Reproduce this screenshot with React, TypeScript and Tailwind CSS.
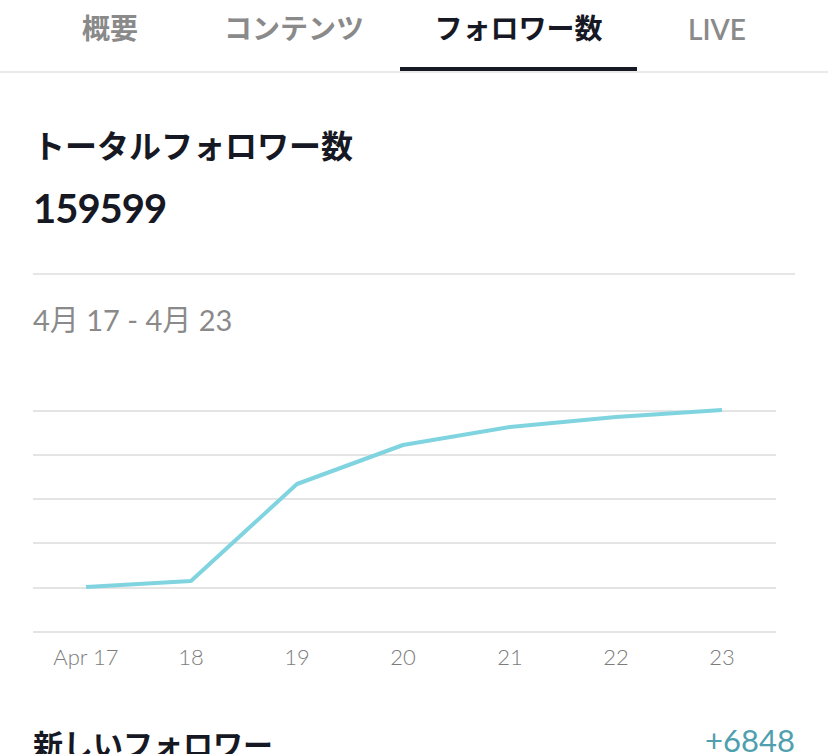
import React from "react";

const jp = "font-['Lato','Noto_Sans_CJK_JP',sans-serif]";

const pts: [number, number][] = [
  [53, 187],
  [158, 181],
  [264, 84],
  [370, 45],
  [477, 27],
  [583, 17],
  [689, 10],
];
const labels = ["Apr 17", "18", "19", "20", "21", "22", "23"];
const grid = [11, 55, 99, 143, 188, 232];

export default function App() {
  return (
    <div className={`w-[828px] h-[754px] overflow-hidden bg-white ${jp}`}>
      {/* Tabs */}
      <div className="flex h-[73px] border-b-2 border-[#e9e9e9]">
        <div className="ml-[45px] w-[130px] flex justify-center pt-[14px] text-[28px] leading-[28px] font-semibold text-[#8a8a8a]">
          概要
        </div>
        <div className="ml-[13px] w-[212px] flex justify-center pt-[14px] text-[28px] leading-[28px] font-semibold text-[#8a8a8a]">
          コンテンツ
        </div>
        <div className="w-[237px] h-[71px] flex justify-center pt-[14px] text-[28px] leading-[28px] font-bold text-[#161823] border-b-4 border-[#161823]">
          フォロワー数
        </div>
        <div className="w-[160px] flex justify-center pt-[15px] text-[28px] leading-[28px] font-semibold text-[#8a8a8a]">
          LIVE
        </div>
      </div>

      <div className="px-[33px]">
        <div className="mt-[57px] text-[32px] leading-[32px] font-bold text-[#161823]">
          トータルフォロワー数
        </div>
        <div className="mt-[26px] text-[40px] leading-[40px] font-bold tracking-[-1px] text-[#161823]">
          159599
        </div>
        <div className="mt-[45px] h-[2px] bg-[#e6e6e6]" />
        <div className="mt-[30px] text-[29px] leading-[29px] text-[#8a8a8a]">
          4月 17 - 4月 23
        </div>

        <svg
          className="mt-[66px] block"
          width="763"
          height="280"
          viewBox="0 0 763 280"
        >
          {grid.map((y) => (
            <line
              key={y}
              x1="0"
              x2="743"
              y1={y}
              y2={y}
              stroke="#e4e4e4"
              strokeWidth="2"
            />
          ))}
          <polyline
            points={pts.map((p) => p.join(",")).join(" ")}
            fill="none"
            stroke="#80d4e0"
            strokeWidth="4"
            strokeLinejoin="round"
          />
          {labels.map((l, i) => (
            <text
              key={l}
              x={pts[i][0]}
              y="265"
              textAnchor="middle"
              fontSize="22"
              fontWeight="300"
              fill="#7c7c7c"
              fontFamily="Lato, sans-serif"
            >
              {l}
            </text>
          ))}
        </svg>

        <div className="mt-[49px] flex justify-between items-start">
          <div className="text-[30px] leading-[30px] font-bold text-[#161823]">
            新しいフォロワー
          </div>
          <div className="-mt-[4px] text-[31px] leading-[31px] text-[#4f9fae]">
            +6848
          </div>
        </div>
      </div>
    </div>
  );
}
